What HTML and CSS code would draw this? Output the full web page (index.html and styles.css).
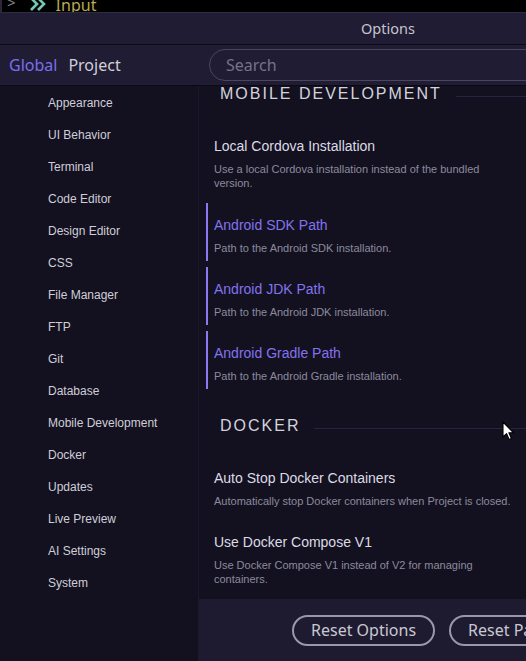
FILE: index.html
```html
<!DOCTYPE html>
<html>
<head>
<meta charset="utf-8">
<link rel="stylesheet" href="styles.css">
</head>
<body>
<div class="topstrip">
  <span class="chev">&gt;</span>
  <svg class="dchev" width="18" height="12" viewBox="0 0 18 12"><path d="M1 -2 L7 4 L1 10 M8 -2 L14 4 L8 10" fill="none" stroke="#74c7b4" stroke-width="2.6"/></svg>
  <span class="input">Input</span>
</div>
<div class="dialog">
  <div class="titlebar">Options</div>
  <div class="tabsrow">
    <div class="tabs">
      <span class="tab active">Global</span>
      <span class="tab">Project</span>
    </div>
    <div class="searchwrap">
      <div class="search">Search</div>
    </div>
  </div>
  <div class="main">
    <nav class="sidebar">
      <div class="navitem">Appearance</div>
      <div class="navitem">UI Behavior</div>
      <div class="navitem">Terminal</div>
      <div class="navitem">Code Editor</div>
      <div class="navitem">Design Editor</div>
      <div class="navitem">CSS</div>
      <div class="navitem">File Manager</div>
      <div class="navitem">FTP</div>
      <div class="navitem">Git</div>
      <div class="navitem">Database</div>
      <div class="navitem">Mobile Development</div>
      <div class="navitem">Docker</div>
      <div class="navitem">Updates</div>
      <div class="navitem">Live Preview</div>
      <div class="navitem">AI Settings</div>
      <div class="navitem">System</div>
    </nav>
    <div class="right">
      <div class="scroll">
        <div class="heading stuck"><span>MOBILE DEVELOPMENT</span></div>
        <div class="item tall">
          <div class="ititle">Local Cordova Installation</div>
          <div class="idesc">Use a local Cordova installation instead of the bundled version.</div>
        </div>
        <div class="item marked">
          <div class="ititle">Android SDK Path</div>
          <div class="idesc">Path to the Android SDK installation.</div>
        </div>
        <div class="item marked">
          <div class="ititle">Android JDK Path</div>
          <div class="idesc">Path to the Android JDK installation.</div>
        </div>
        <div class="item marked">
          <div class="ititle">Android Gradle Path</div>
          <div class="idesc">Path to the Android Gradle installation.</div>
        </div>
        <div class="heading"><span>DOCKER</span></div>
        <div class="item">
          <div class="ititle">Auto Stop Docker Containers</div>
          <div class="idesc">Automatically stop Docker containers when Project is closed.</div>
        </div>
        <div class="item">
          <div class="ititle">Use Docker Compose V1</div>
          <div class="idesc">Use Docker Compose V1 instead of V2 for managing containers.</div>
        </div>
      </div>
      <div class="footer">
        <button class="btn">Reset Options</button>
        <button class="btn">Reset Panels</button>
      </div>
    </div>
  </div>
</div>
<svg class="cursor" width="13" height="21" viewBox="0 0 13 21"><path d="M1 1 L1 16 L4.6 12.6 L7.2 18.6 L9.4 17.6 L6.9 11.8 L11.6 11.8 Z" fill="#ffffff" stroke="#000000" stroke-width="1.1" stroke-linejoin="round"/></svg>
</body>
</html>
```
FILE: styles.css
```css
html, body {
  margin: 0;
  padding: 0;
}
body {
  width: 526px;
  height: 661px;
  overflow: hidden;
  background: #13111f;
  position: relative;
  font-family: "Liberation Sans", Arial, sans-serif;
}
.topstrip {
  height: 12px;
  background: #000000;
  border-bottom: 1px solid #2e2b46;
  border-left: 2px solid #2a2838;
  display: flex;
  align-items: flex-end;
  overflow: hidden;
  position: relative;
}
.chev {
  font-family: "Noto Sans", sans-serif;
  font-size: 15px;
  line-height: 18px;
  color: #8a8a8a;
  margin-left: 5px;
  transform: translateY(-1px);
}
.dchev {
  margin-left: 14px;
  align-self: flex-start;
}
.input {
  font-family: "Noto Sans", sans-serif;
  font-size: 16px;
  line-height: 20px;
  color: #b8aa4e;
  margin-left: 8px;
  transform: translateY(3px);
}
.dialog {
  width: 776px;
}
.titlebar {
  height: 31px;
  background: #1f1c33;
  border-bottom: 1px solid #0b0a13;
  text-align: center;
  font-family: "Noto Sans", sans-serif;
  font-size: 14.5px;
  line-height: 31px;
  color: #c6c4d0;
}
.tabsrow {
  height: 40px;
  background: #1f1c33;
  border-bottom: 1px solid #0b0a13;
  display: flex;
  align-items: center;
}
.tabs {
  width: 200px;
  display: flex;
  gap: 11px;
  padding-left: 9px;
  box-sizing: border-box;
  font-family: "Noto Sans", sans-serif;
  font-size: 16px;
  color: #d0cfda;
}
.tab.active {
  color: #7b6ef0;
}
.searchwrap {
  flex: 1;
  padding-left: 9px;
}
.search {
  height: 30px;
  border: 1px solid #4a465f;
  border-radius: 16px;
  padding-left: 16px;
  font-family: "Noto Sans", sans-serif;
  font-size: 16px;
  line-height: 30px;
  color: #76728a;
}
.main {
  display: flex;
  height: 575px;
}
.sidebar {
  width: 199px;
  border-right: 1px solid #1b1929;
  background: #13111f;
  padding-left: 48px;
  padding-top: 1px;
  box-sizing: border-box;
  flex: none;
}
.navitem {
  font-size: 12px;
  line-height: 32px;
  height: 32px;
  color: #cfced8;
}
.right {
  flex: 1;
  display: flex;
  flex-direction: column;
  background: #131120;
}
.scroll {
  flex: 1;
  overflow: hidden;
  padding-left: 7px;
}
.heading {
  display: flex;
  align-items: center;
  margin: 30px 0 23px;
  padding-left: 14px;
  font-size: 16px;
  line-height: 14px;
  letter-spacing: 2px;
  color: #d4d3dc;
}
.heading::after {
  content: "";
  flex: 1;
  height: 1px;
  background: #27253d;
  margin-left: 14px;
  transform: translateY(2px);
}
.heading.stuck {
  margin: 1px 0 23px;
}
.item {
  border-left: 2px solid transparent;
  padding: 12px 0 6px 6px;
  margin-bottom: 6px;
}
.item.tall {
  margin-bottom: 7px;
}
.item.marked {
  border-left-color: #8a7af2;
}
.ititle {
  font-size: 14px;
  line-height: 20px;
  color: #dcdbe4;
}
.item.marked .ititle {
  color: #8273ee;
}
.idesc {
  font-size: 11px;
  line-height: 14px;
  color: #8c8a9c;
  margin-top: 6px;
  max-width: 300px;
}
.footer {
  height: 62px;
  flex: none;
  background: #1e1b31;
  display: flex;
  align-items: center;
  gap: 14px;
  padding-left: 93px;
}
.btn {
  height: 31px;
  padding: 0 17px;
  border: 2px solid #9a98a8;
  border-radius: 16px;
  background: transparent;
  color: #c9c8d2;
  font-family: "Noto Sans", sans-serif;
  font-size: 16px;
  line-height: 27px;
  white-space: nowrap;
}
.cursor {
  position: absolute;
  left: 502px;
  top: 421px;
}
```
